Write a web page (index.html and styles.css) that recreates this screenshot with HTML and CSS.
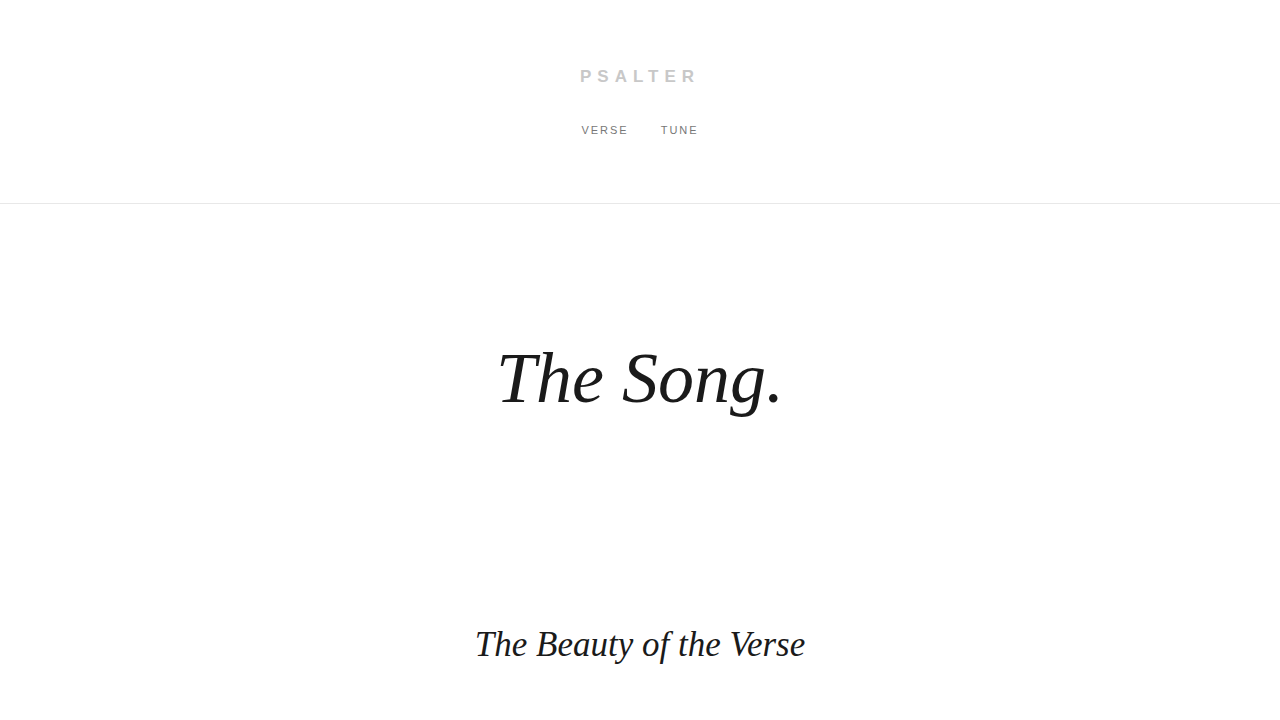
FILE: index.html
```html
<!DOCTYPE html>
<html lang="en">
  <head>
    <meta charset="UTF-8" />
    <meta name="viewport" content="width=device-width, initial-scale=1.0" />
    <title>Psalter</title>
    <link rel="stylesheet" href="styles.css">
  </head>
  <body>
    <header class="site-header">
      <a class="logo" href="#">PSALTER</a>
      <nav class="nav">
        <a href="#">VERSE</a>
        <a href="#">TUNE</a>
      </nav>
    </header>
    <main>
      <section class="hero">
        <h1>The Song.</h1>
      </section>
      <section class="intro">
        <h2>The Beauty of the Verse</h2>
      </section>
    </main>
  </body>
</html>
```

FILE: styles.css
```css
* {
  margin: 0;
  padding: 0;
  box-sizing: border-box;
}
body {
  background-color: #fff;
  font-family: "Liberation Sans", Arial, sans-serif;
  color: #1a1a1a;
}
a {
  text-decoration: none;
}
.site-header {
  height: 204px;
  border-bottom: 1px solid #e8e8e8;
  display: flex;
  flex-direction: column;
  align-items: center;
  padding-top: 67px;
}
.logo {
  font-size: 17px;
  font-weight: bold;
  letter-spacing: 6px;
  color: #c8c8c8;
}
.nav {
  display: flex;
  gap: 32px;
  margin-top: 37px;
}
.nav a {
  font-size: 11px;
  letter-spacing: 2px;
  color: #777;
}
.hero {
  height: 348px;
  display: flex;
  align-items: center;
  justify-content: center;
}
.hero h1 {
  font-family: "Liberation Serif", "Times New Roman", serif;
  font-style: italic;
  font-weight: normal;
  font-size: 72px;
  color: #1a1a1a;
}
.intro {
  text-align: center;
  padding-top: 73px;
}
.intro h2 {
  font-family: "Liberation Serif", "Times New Roman", serif;
  font-style: italic;
  font-weight: normal;
  font-size: 35px;
  color: #1a1a1a;
}
```
